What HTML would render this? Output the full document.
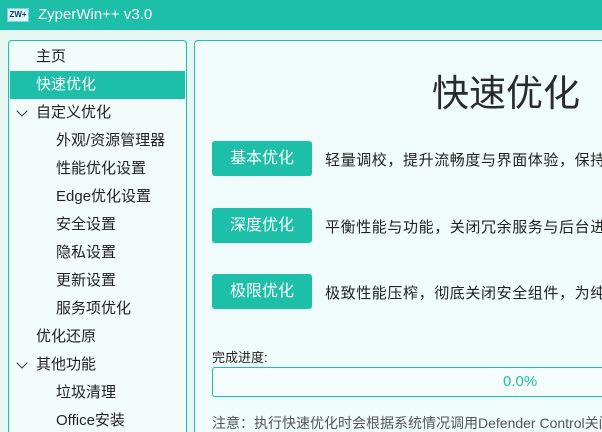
<!DOCTYPE html>
<html><head><meta charset="utf-8"><style>
*{margin:0;padding:0;box-sizing:border-box}
html,body{width:602px;height:432px;overflow:hidden}
body{background:#e6f7f4;font-family:"Liberation Sans","Noto Sans CJK SC",sans-serif;position:relative;color:#222}
.wrap{position:absolute;left:0;top:0;width:602px;height:432px;overflow:hidden}
.tb{position:absolute;left:0;top:0;width:602px;height:30px;background:#1dbfa9;color:#fff;font-size:15px}
.logo{position:absolute;left:7px;top:8px;width:22px;height:14px;background:#dff;border:1px solid #8cf;font-size:8px;color:#137;font-weight:bold;line-height:12px;text-align:center}
.tt{position:absolute;left:38px;top:6px}
.side{position:absolute;left:8px;top:40px;width:179px;height:400px;background:#f2fcfb;border:1px solid #1dbfa9;border-radius:4px}
.it{position:absolute;left:1px;width:175px;height:28px;line-height:28px;font-size:15px}
.sel{background:#1dbfa9;color:#fff}
.chev{position:absolute;left:8px;top:8px;width:8px;height:8px;border-right:1.5px solid #333;border-bottom:1.5px solid #333;transform:rotate(45deg)}
.main{position:absolute;left:194px;top:40px;width:408px;height:392px;background:#f0fcfb;border:1px solid #1dbfa9;border-right:none;border-bottom:none;border-radius:4px 0 0 0;overflow:hidden}
h1{position:absolute;left:237px;top:22px;font-size:37px;font-weight:normal;color:#2a2a2a}
.btn{position:absolute;left:17px;width:100px;height:35px;background:#1dbfa9;color:#fff;border-radius:3px;font-size:16px;line-height:35px;text-align:center}
.desc{position:absolute;left:130px;font-size:15px;letter-spacing:0.6px;white-space:nowrap;color:#222}
.bar{position:absolute;left:17px;top:326px;width:420px;height:30px;border:1px solid #1dbfa9;border-radius:3px;background:#f4fdfc;color:#1dbfa9;font-size:15px;line-height:28px;padding-left:290px}
</style></head><body><div class="wrap">
<div class="tb"><div class="logo">ZW+</div><div class="tt">ZyperWin++ v3.0</div></div>
<div class="side">
<div class="it" style="top:2px;padding-left:26px">主页</div>
<div class="it sel" style="top:30px;padding-left:26px">快速优化</div>
<div class="it" style="top:58px;padding-left:26px"><span class="chev"></span>自定义优化</div>
<div class="it" style="top:86px;padding-left:46px">外观/资源管理器</div>
<div class="it" style="top:114px;padding-left:46px">性能优化设置</div>
<div class="it" style="top:142px;padding-left:46px">Edge优化设置</div>
<div class="it" style="top:170px;padding-left:46px">安全设置</div>
<div class="it" style="top:198px;padding-left:46px">隐私设置</div>
<div class="it" style="top:226px;padding-left:46px">更新设置</div>
<div class="it" style="top:254px;padding-left:46px">服务项优化</div>
<div class="it" style="top:282px;padding-left:26px">优化还原</div>
<div class="it" style="top:310px;padding-left:26px"><span class="chev"></span>其他功能</div>
<div class="it" style="top:338px;padding-left:46px">垃圾清理</div>
<div class="it" style="top:366px;padding-left:46px">Office安装</div>
</div>
<div class="main">
<h1>快速优化</h1>
<div class="btn" style="top:100px">基本优化</div><div class="desc" style="top:108px">轻量调校，提升流畅度与界面体验，保持系统稳定</div>
<div class="btn" style="top:167px">深度优化</div><div class="desc" style="top:175px">平衡性能与功能，关闭冗余服务与后台进程</div>
<div class="btn" style="top:233px">极限优化</div><div class="desc" style="top:241px">极致性能压榨，彻底关闭安全组件，为纯净系统</div>
<div style="position:absolute;left:17px;top:306px;font-size:13px">完成进度:</div>
<div class="bar">0.0%</div>
<div style="position:absolute;left:17px;top:372px;font-size:14px;color:#555;white-space:nowrap">注意：执行快速优化时会根据系统情况调用Defender Control关闭</div>
</div>
</div></body></html>
